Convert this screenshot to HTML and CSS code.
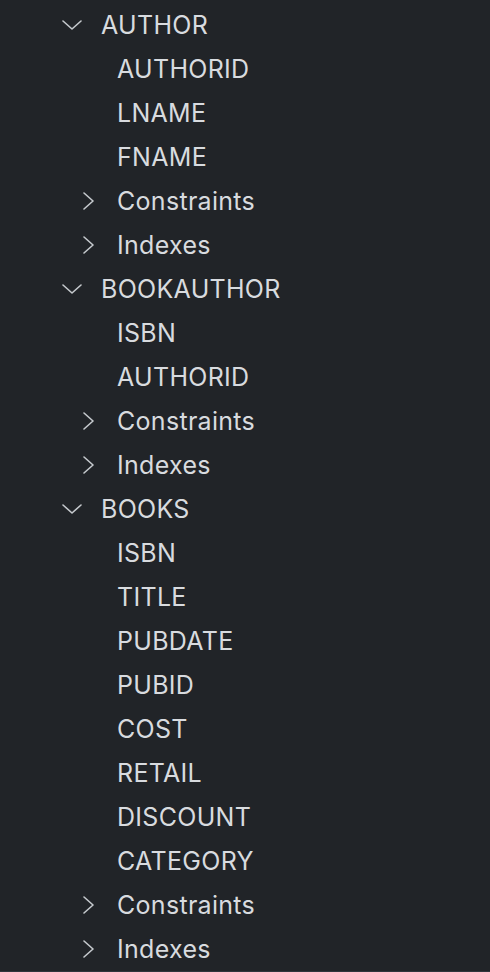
FILE: index.html
```html
<!DOCTYPE html>
<html>
<head>
<meta charset="utf-8">
<link rel="stylesheet" href="styles.css">
</head>
<body>
<div class="tree">
  <div class="row l1"><span class="tw"><svg class="down" viewBox="0 0 20 10"><path d="M1 1 L10 9 L19 1"/></svg></span><span class="label">AUTHOR</span></div>
  <div class="row l2"><span class="tw"></span><span class="label">AUTHORID</span></div>
  <div class="row l2"><span class="tw"></span><span class="label">LNAME</span></div>
  <div class="row l2"><span class="tw"></span><span class="label">FNAME</span></div>
  <div class="row l2"><span class="tw"><svg class="right" viewBox="0 0 11 18"><path d="M1 1 L10 9 L1 17"/></svg></span><span class="label">Constraints</span></div>
  <div class="row l2"><span class="tw"><svg class="right" viewBox="0 0 11 18"><path d="M1 1 L10 9 L1 17"/></svg></span><span class="label">Indexes</span></div>
  <div class="row l1"><span class="tw"><svg class="down" viewBox="0 0 20 10"><path d="M1 1 L10 9 L19 1"/></svg></span><span class="label">BOOKAUTHOR</span></div>
  <div class="row l2"><span class="tw"></span><span class="label">ISBN</span></div>
  <div class="row l2"><span class="tw"></span><span class="label">AUTHORID</span></div>
  <div class="row l2"><span class="tw"><svg class="right" viewBox="0 0 11 18"><path d="M1 1 L10 9 L1 17"/></svg></span><span class="label">Constraints</span></div>
  <div class="row l2"><span class="tw"><svg class="right" viewBox="0 0 11 18"><path d="M1 1 L10 9 L1 17"/></svg></span><span class="label">Indexes</span></div>
  <div class="row l1"><span class="tw"><svg class="down" viewBox="0 0 20 10"><path d="M1 1 L10 9 L19 1"/></svg></span><span class="label">BOOKS</span></div>
  <div class="row l2"><span class="tw"></span><span class="label">ISBN</span></div>
  <div class="row l2"><span class="tw"></span><span class="label">TITLE</span></div>
  <div class="row l2"><span class="tw"></span><span class="label">PUBDATE</span></div>
  <div class="row l2"><span class="tw"></span><span class="label">PUBID</span></div>
  <div class="row l2"><span class="tw"></span><span class="label">COST</span></div>
  <div class="row l2"><span class="tw"></span><span class="label">RETAIL</span></div>
  <div class="row l2"><span class="tw"></span><span class="label">DISCOUNT</span></div>
  <div class="row l2"><span class="tw"></span><span class="label">CATEGORY</span></div>
  <div class="row l2"><span class="tw"><svg class="right" viewBox="0 0 11 18"><path d="M1 1 L10 9 L1 17"/></svg></span><span class="label">Constraints</span></div>
  <div class="row l2"><span class="tw"><svg class="right" viewBox="0 0 11 18"><path d="M1 1 L10 9 L1 17"/></svg></span><span class="label">Indexes</span></div>
</div>
<div class="bottom"></div>
</body>
</html>
```
FILE: styles.css
```css
html, body {
  margin: 0;
  padding: 0;
  background: #212428;
  height: 100%;
  overflow: hidden;
}
body {
  display: flex;
  flex-direction: column;
  font-family: Inter, "Noto Sans", sans-serif;
  color: #d8dbdf;
}
.tree {
  flex: 1;
  padding-top: 3px;
}
.row {
  height: 44px;
  display: flex;
  align-items: center;
  font-size: 25px;
  letter-spacing: 0.3px;
  white-space: nowrap;
}
.l1 { padding-left: 56px; }
.l2 { padding-left: 72px; }
.tw {
  width: 45px;
  flex: 0 0 45px;
  height: 44px;
  display: flex;
  align-items: center;
}
.tw svg {
  fill: none;
  stroke: #c5c9cd;
  stroke-width: 1.6;
  stroke-linecap: round;
  stroke-linejoin: round;
}
.tw .down {
  width: 20px;
  height: 10px;
  margin-left: 6px;
  margin-top: -1px;
}
.tw .right {
  width: 11px;
  height: 18px;
  margin-left: 11px;
}
.label {
  line-height: 44px;
}
.bottom {
  height: 2px;
  background: #30363c;
  flex: 0 0 2px;
}
```
